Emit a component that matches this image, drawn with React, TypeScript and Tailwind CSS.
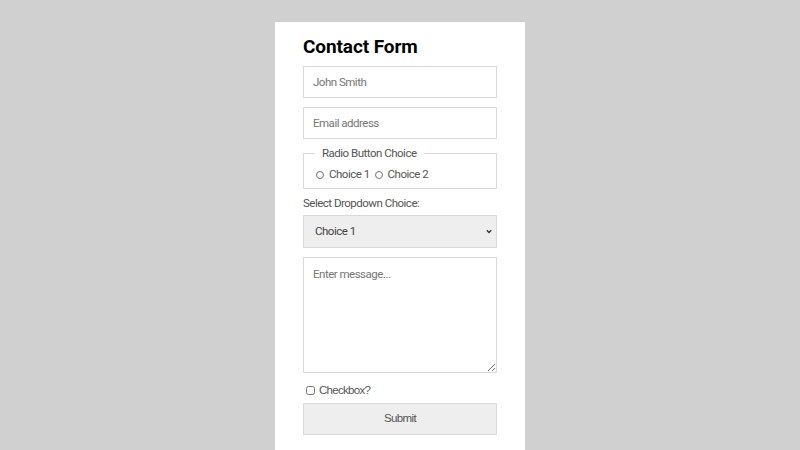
export default function App() {
  return (
    <div className="min-h-screen h-[450px] overflow-hidden bg-[#d0d0d0] flex justify-center pt-[22px] font-['Roboto',sans-serif]">
      <div className="w-[250px] bg-white px-[28px] pt-[13px] pb-6">
        <h1 className="text-[19px] font-bold text-black leading-[24px] mb-[7px] tracking-[-0.1px]">Contact Form</h1>

        <form className="flex flex-col">
          <input
            type="text"
            placeholder="John Smith"
            className="h-[32px] border border-[#d9d9d9] px-[9px] text-[11.5px] tracking-[-0.5px] text-[#444] placeholder:text-[#777] outline-none"
          />
          <input
            type="email"
            placeholder="Email address"
            className="mt-[9px] h-[32px] border border-[#d9d9d9] px-[9px] text-[11.5px] tracking-[-0.5px] text-[#444] placeholder:text-[#777] outline-none"
          />

          <fieldset className="mt-[7px] border border-[#d9d9d9] px-[12px] pb-[5px] pt-0">
            <legend className="px-[7px] ml-[-1px] text-[11.5px] tracking-[-0.5px] text-[#555] leading-[14px]">Radio Button Choice</legend>
            <div className="flex items-center text-[11.5px] tracking-[-0.5px] text-[#555] mt-[6px]">
              <label className="flex items-center gap-[5px]">
                <input type="radio" name="choice" className="w-[8px] h-[8px] m-0" />
                Choice 1
              </label>
              <label className="flex items-center gap-[5px] ml-[5px]">
                <input type="radio" name="choice" className="w-[8px] h-[8px] m-0" />
                Choice 2
              </label>
            </div>
          </fieldset>

          <label className="mt-[7px] text-[11.5px] tracking-[-0.5px] text-[#555] leading-[14px]">Select Dropdown Choice:</label>
          <div className="relative mt-[5px]">
            <select className="w-full appearance-none h-[33px] border border-[#d9d9d9] bg-[#eeeeee] px-[11px] text-[11.5px] tracking-[-0.5px] text-[#444] outline-none">
              <option>Choice 1</option>
              <option>Choice 2</option>
            </select>
            <svg
              className="pointer-events-none absolute right-[5px] top-[14px]"
              width="6"
              height="5"
              viewBox="0 0 6 5"
              fill="none"
            >
              <path d="M0.8 1.2 L3 3.5 L5.2 1.2" stroke="#333" strokeWidth="1.3" />
            </svg>
          </div>

          <textarea
            placeholder="Enter message..."
            className="mt-[9px] h-[116px] border border-[#d9d9d9] px-[9px] py-[8px] text-[11.5px] tracking-[-0.5px] text-[#444] placeholder:text-[#777] outline-none"
          />

          <label className="mt-[9px] flex items-center gap-[4px] pl-[3px] text-[11.5px] tracking-[-0.7px] text-[#555] font-['Liberation_Sans',sans-serif]">
            <input type="checkbox" className="w-[9px] h-[9px] m-0" />
            Checkbox?
          </label>

          <button
            type="button"
            className="mt-[3px] h-[32px] border border-[#d9d9d9] bg-[#eeeeee] text-[11.5px] tracking-[-0.6px] text-[#555] font-['Liberation_Sans',sans-serif]"
          >
            Submit
          </button>
        </form>
      </div>
    </div>
  );
}
